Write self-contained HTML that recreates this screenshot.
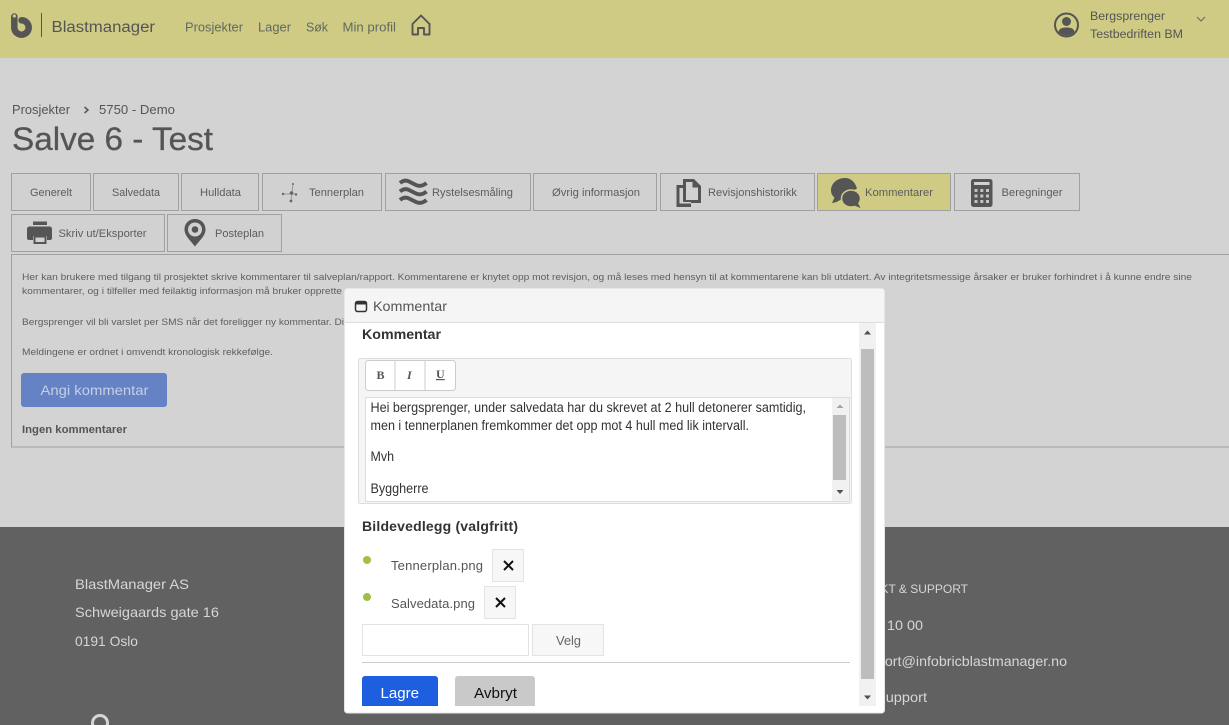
<!DOCTYPE html>
<html lang="no"><head><meta charset="utf-8"><title>Salve 6 - Test</title>
<style>
html,body{margin:0;padding:0;width:1229px;height:725px;overflow:hidden;background:#d3d3d3}
svg{display:block;position:absolute;left:0;top:0}
text{font-family:"Liberation Sans",sans-serif;fill:#555;white-space:pre}
.t{font-size:11px;fill:#5c5c5c}
.tab{fill:#d1d1d1;stroke:#a0a0a0;stroke-width:1}
.p{font-size:9.5px;fill:#5e5e5e}
.n{font-size:13px;fill:#5f6a5e}
.f{font-size:14px;fill:#d6d6d6}
.e{font-size:13.5px;fill:#333}
.b{font-weight:bold;fill:#333}
</style></head><body>
<svg width="1229" height="725" viewBox="0 0 1229 725" xmlns="http://www.w3.org/2000/svg">
<rect width="1229" height="725" fill="#d3d3d3"/>
<rect width="1229" height="58" fill="#cfcb85"/>
<!-- logo -->
<path d="M14.300 16.500V27.500A7.200 7.200 0 1 0 21.500 20.300" fill="none" stroke="#555" stroke-width="6.500" stroke-linecap="round"/>
<circle cx="14.300" cy="16" r="1.600" fill="#cfcb85"/>
<rect x="41" y="13" width="1" height="24" fill="#555"/>
<text x="51.500" y="32" font-size="15.500" textLength="103.500" lengthAdjust="spacingAndGlyphs">Blastmanager</text>
<text class="n" x="185" y="31.500" textLength="58" lengthAdjust="spacingAndGlyphs">Prosjekter</text>
<text class="n" x="258" y="31.500" textLength="33" lengthAdjust="spacingAndGlyphs">Lager</text>
<text class="n" x="306" y="31.500" textLength="22" lengthAdjust="spacingAndGlyphs">Søk</text>
<text class="n" x="342.500" y="31.500" textLength="53.500" lengthAdjust="spacingAndGlyphs">Min profil</text>
<path d="M412 24.500L421 15.500L430 24.500M412.500 24V34.500H418V28H424V34.500H429.500V24" fill="none" stroke="#555" stroke-width="1.900" stroke-linejoin="round"/>
<!-- user -->
<circle cx="1066.500" cy="25" r="11.500" fill="none" stroke="#555" stroke-width="2"/>
<circle cx="1066.500" cy="21.500" r="4.500" fill="#555"/>
<path d="M1058.500 32C1059 28.500 1062 27.500 1066.500 27.500S1074 28.500 1074.500 32A11 11 0 0 1 1058.500 32Z" fill="#555"/>
<text x="1090" y="20" font-size="11.500" textLength="75" lengthAdjust="spacingAndGlyphs" fill="#555">Bergsprenger</text>
<text x="1090" y="38" font-size="11.500" textLength="93" lengthAdjust="spacingAndGlyphs">Testbedriften BM</text>
<path d="M1197 17L1201 21L1205 17" fill="none" stroke="#666" stroke-width="1"/>
<!-- breadcrumbs -->
<text x="12" y="114" font-size="13" fill="#666" textLength="58" lengthAdjust="spacingAndGlyphs">Prosjekter</text>
<path d="M84.500 107L88 110L84.500 113" fill="none" stroke="#555" stroke-width="1.500"/>
<text x="99" y="114" font-size="13" fill="#666" textLength="76" lengthAdjust="spacingAndGlyphs">5750 - Demo</text>
<text x="12" y="150" font-size="32" textLength="201" lengthAdjust="spacingAndGlyphs" stroke="#555" stroke-width=".3">Salve 6 - Test</text>
<!-- tabs -->
<rect class="tab" x="11.500" y="173.500" width="79" height="37"/>
<rect class="tab" x="93.500" y="173.500" width="85" height="37"/>
<rect class="tab" x="181.500" y="173.500" width="77" height="37"/>
<rect class="tab" x="262.500" y="173.500" width="119" height="37"/>
<rect class="tab" x="385.500" y="173.500" width="145" height="37"/>
<rect class="tab" x="533.500" y="173.500" width="123" height="37"/>
<rect class="tab" x="660.500" y="173.500" width="154" height="37"/>
<rect x="817.500" y="173.500" width="133" height="37" fill="#cfcb85" stroke="#a0a0a0"/>
<rect class="tab" x="954.500" y="173.500" width="125" height="37"/>
<rect class="tab" x="11.500" y="214.500" width="153" height="37"/>
<rect class="tab" x="167.500" y="214.500" width="114" height="37"/>
<text class="t" x="30" y="196" textLength="42" lengthAdjust="spacingAndGlyphs">Generelt</text>
<text class="t" x="112" y="196" textLength="48" lengthAdjust="spacingAndGlyphs">Salvedata</text>
<text class="t" x="200" y="196" textLength="41" lengthAdjust="spacingAndGlyphs">Hulldata</text>
<text class="t" x="309" y="196" textLength="55" lengthAdjust="spacingAndGlyphs">Tennerplan</text>
<text class="t" x="432" y="196" textLength="81" lengthAdjust="spacingAndGlyphs">Rystelsesmåling</text>
<text class="t" x="552" y="196" textLength="88" lengthAdjust="spacingAndGlyphs">Øvrig informasjon</text>
<text class="t" x="708" y="196" textLength="89" lengthAdjust="spacingAndGlyphs">Revisjonshistorikk</text>
<text class="t" x="865" y="196" textLength="68" lengthAdjust="spacingAndGlyphs">Kommentarer</text>
<text class="t" x="1001.500" y="196" textLength="61" lengthAdjust="spacingAndGlyphs">Beregninger</text>
<text class="t" x="58.500" y="237" textLength="88" lengthAdjust="spacingAndGlyphs">Skriv ut/Eksporter</text>
<text class="t" x="215" y="237" textLength="49" lengthAdjust="spacingAndGlyphs">Posteplan</text>
<!-- tennerplan icon -->
<path d="M283 194L296 194M293 184L291 201" fill="none" stroke="#8a8a8a" stroke-width=".8"/>
<g fill="#666">
<circle cx="283" cy="194" r="1.200"/><circle cx="293" cy="184" r="1"/><circle cx="291.500" cy="193" r="1.800"/><circle cx="296" cy="194.500" r="1.200"/><circle cx="291" cy="201" r="1.400"/>
</g>
<!-- wave icon -->
<g fill="none" stroke="#555" stroke-width="4" stroke-linejoin="round">
<path d="M400 183C403 180.500 406 180 409 181.500L416 185C419 186.500 423 186 426.500 183"/>
<path d="M400 191.500C403 189 406 188.500 409 190L416 193.500C419 195 423 194.500 426.500 191.500"/>
<path d="M400 200C403 197.500 406 197 409 198.500L416 202C419 203.500 423 203 426.500 200"/>
</g>
<!-- docs icon -->
<path d="M683 179H694L701 186V203H683ZM686 182V200H698V187.500H692.500V182Z" fill="#555" fill-rule="evenodd"/>
<path d="M676.500 185H683V188H679.500V203.500H691V207H676.500Z" fill="#555"/>
<rect x="681" y="202" width="10" height="1" fill="#d1d1d1"/>
<!-- chat icon -->
<path d="M845 178C837 178 831 183.500 831 190.500C831 193.500 832.500 196 834.500 197.500L832 203C836 202.500 839 201 841.500 199C846 197 852 191 857 188.500C855 182 851 178 845 178Z" fill="#555"/>
<ellipse cx="851" cy="198.500" rx="9.500" ry="8.500" fill="#555" stroke="#cfcb85" stroke-width="1.500"/>
<path d="M853 205L860.500 208L857.500 202Z" fill="#555"/>
<!-- calc icon -->
<rect x="971" y="179" width="21.500" height="28" rx="2.500" fill="#555"/>
<rect x="974" y="182" width="15.500" height="3" fill="#d1d1d1"/>
<g fill="#c4c4c4">
<rect x="974.500" y="189" width="3" height="3"/><rect x="980.300" y="189" width="3" height="3"/><rect x="986" y="189" width="3" height="3"/>
<rect x="974.500" y="194.500" width="3" height="3"/><rect x="980.300" y="194.500" width="3" height="3"/><rect x="986" y="194.500" width="3" height="3"/>
<rect x="974.500" y="200" width="3" height="3"/><rect x="980.300" y="200" width="3" height="3"/><rect x="986" y="200" width="3" height="3"/>
</g>
<!-- print icon -->
<path d="M33 221.500H47V225H33Z" fill="#555"/>
<path d="M30 226.500H49.500C51 226.500 52 227.500 52 229V238C52 239.500 51 240 50 240H47V236H33V240H29.500C28 240 27 239.500 27 238V229C27 227.500 28 226.500 30 226.500Z" fill="#555"/>
<path d="M34.500 236.500H45.500V243H34.500Z" fill="none" stroke="#555" stroke-width="2"/>
<!-- pin icon -->
<path d="M195 219C189 219 184.500 223.500 184.500 229.500C184.500 236 191 241 195 246.500C199 241 205.500 236 205.500 229.500C205.500 223.500 201 219 195 219Z" fill="#555"/>
<circle cx="195" cy="229.500" r="7" fill="#d1d1d1"/>
<circle cx="195" cy="229.500" r="3.300" fill="#555"/>
<!-- content -->
<rect x="11.500" y="254.500" width="1240" height="192.500" fill="#d3d3d3" stroke="#a0a0a0"/>
<text class="p" x="22" y="280" textLength="1170" lengthAdjust="spacingAndGlyphs">Her kan brukere med tilgang til prosjektet skrive kommentarer til salveplan/rapport. Kommentarene er knytet opp mot revisjon, og må leses med hensyn til at kommentarene kan bli utdatert. Av integritetsmessige årsaker er bruker forhindret i å kunne endre sine</text>
<text class="p" x="22" y="294" textLength="320" lengthAdjust="spacingAndGlyphs">kommentarer, og i tilfeller med feilaktig informasjon må bruker opprette</text>
<text class="p" x="22" y="325" textLength="322" lengthAdjust="spacingAndGlyphs">Bergsprenger vil bli varslet per SMS når det foreligger ny kommentar. Di</text>
<text class="p" x="22" y="355" textLength="251" lengthAdjust="spacingAndGlyphs">Meldingene er ordnet i omvendt kronologisk rekkefølge.</text>
<rect x="21" y="373" width="146" height="34" rx="3" fill="#6482c4"/>
<text x="40.500" y="395" font-size="14" style="fill:#c5cfe6" textLength="108" lengthAdjust="spacingAndGlyphs">Angi kommentar</text>
<text x="22" y="433" font-size="11" font-weight="bold" textLength="105" lengthAdjust="spacingAndGlyphs">Ingen kommentarer</text>
<!-- footer -->
<rect y="527" width="1229" height="198" fill="#616161"/>
<text class="f" x="75" y="589" textLength="114" lengthAdjust="spacingAndGlyphs">BlastManager AS</text>
<text class="f" x="75" y="617" textLength="144" lengthAdjust="spacingAndGlyphs">Schweigaards gate 16</text>
<text class="f" x="75" y="646" textLength="63" lengthAdjust="spacingAndGlyphs">0191 Oslo</text>
<circle cx="100" cy="723" r="7.500" fill="none" stroke="#d6d6d6" stroke-width="3"/>
<text x="840" y="593" font-size="12" style="fill:#d6d6d6" textLength="128" lengthAdjust="spacingAndGlyphs">KONTAKT &amp; SUPPORT</text>
<text class="f" x="840" y="630" textLength="30" lengthAdjust="spacingAndGlyphs">+47 22</text>
<text class="f" x="887" y="630" textLength="36" lengthAdjust="spacingAndGlyphs">10 00</text>
<text class="f" x="854" y="666" textLength="213" lengthAdjust="spacingAndGlyphs">support@infobricblastmanager.no</text>
<text class="f" x="876" y="702" textLength="51" lengthAdjust="spacingAndGlyphs">Support</text>
<!-- modal -->
<rect x="344.500" y="288.500" width="540" height="424.500" rx="3" fill="#fff" stroke="#e6e6e6"/>
<path d="M345 322.500V291.500A3 3 0 0 1 348 289H881.500A3 3 0 0 1 884 291.500V322.500Z" fill="#f5f5f5"/>
<rect x="345" y="322" width="539" height="1" fill="#ddd"/>
<rect x="355.500" y="301.500" width="11" height="10" rx="2" fill="none" stroke="#333" stroke-width="1.500"/>
<rect x="355.500" y="301.500" width="11" height="3" fill="#333"/>
<text x="373" y="311" font-size="14" textLength="74" lengthAdjust="spacingAndGlyphs">Kommentar</text>
<!-- modal scrollbar -->
<rect x="859" y="323" width="17" height="383" fill="#f1f1f1"/>
<rect x="861" y="349" width="13" height="330" fill="#bdbdbd"/>
<path d="M864 334.500L867.500 330.500L871 334.500Z" fill="#505050"/>
<path d="M864 695.500L867.500 699.500L871 695.500Z" fill="#505050"/>
<text x="362" y="339" font-size="14" class="b" textLength="79" lengthAdjust="spacingAndGlyphs">Kommentar</text>
<!-- editor -->
<rect x="358.500" y="358.500" width="493" height="145" rx="2" fill="#f5f5f5" stroke="#ddd"/>
<rect x="365.500" y="360.500" width="90" height="30" rx="3" fill="#fff" stroke="#ccc"/>
<path d="M395 361V390M425 361V390" stroke="#ccc"/>
<text x="376.500" y="379" font-size="12" font-weight="bold" style="font-family:'Liberation Serif',serif">B</text>
<text x="407" y="379" font-size="12" font-weight="bold" font-style="italic" style="font-family:'Liberation Serif',serif">I</text>
<text x="436" y="378" font-size="12" font-weight="bold" text-decoration="underline" style="font-family:'Liberation Serif',serif">U</text>
<rect x="365.500" y="397.500" width="484" height="104" fill="#fff" stroke="#ddd"/>
<rect x="832" y="398" width="17" height="103" fill="#f1f1f1"/>
<rect x="833" y="415" width="13" height="65" fill="#bdbdbd"/>
<path d="M836.500 408L840 404.500L843.500 408Z" fill="#a3a3a3"/>
<path d="M836.500 490L840 494L843.500 490Z" fill="#505050"/>
<text class="e" x="370.500" y="412" textLength="435.500" lengthAdjust="spacingAndGlyphs">Hei bergsprenger, under salvedata har du skrevet at 2 hull detonerer samtidig,</text>
<text class="e" x="370.500" y="430" textLength="378.500" lengthAdjust="spacingAndGlyphs">men i tennerplanen fremkommer det opp mot 4 hull med lik intervall.</text>
<text class="e" x="370.500" y="461" textLength="23.500" lengthAdjust="spacingAndGlyphs">Mvh</text>
<text class="e" x="370.500" y="493" textLength="58" lengthAdjust="spacingAndGlyphs">Byggherre</text>
<text x="362" y="531" font-size="14" class="b" textLength="156" lengthAdjust="spacing">Bildevedlegg (valgfritt)</text>
<!-- attachments -->
<circle cx="367" cy="560" r="4" fill="#9fc045"/>
<circle cx="367" cy="597" r="4" fill="#9fc045"/>
<text x="391" y="570" font-size="13" textLength="92" lengthAdjust="spacing">Tennerplan.png</text>
<text x="391" y="608" font-size="13" textLength="84" lengthAdjust="spacing">Salvedata.png</text>
<rect x="492.500" y="549.500" width="31" height="32" fill="#f7f7f7" stroke="#e3e3e3"/>
<rect x="484.500" y="586.500" width="31" height="32" fill="#f7f7f7" stroke="#e3e3e3"/>
<path d="M504 561L513 570M513 561L504 570M496 598L505 607M505 598L496 607" stroke="#111" stroke-width="2"/>
<rect x="362.500" y="624.500" width="166" height="31" fill="#fff" stroke="#e3e3e3"/>
<rect x="532.500" y="624.500" width="71" height="31" fill="#f7f7f7" stroke="#e3e3e3"/>
<text x="556" y="645" font-size="13" textLength="25" lengthAdjust="spacing" style="fill:#666">Velg</text>
<rect x="362" y="662" width="488" height="1" fill="#ccc"/>
<!-- buttons -->
<path d="M362 706V679A3 3 0 0 1 365 676H435A3 3 0 0 1 438 679V706Z" fill="#1e5fdf"/>
<path d="M455 706V679A3 3 0 0 1 458 676H532A3 3 0 0 1 535 679V706Z" fill="#c9c9c9"/>
<text x="380.500" y="698" font-size="14.500" style="fill:#fff" textLength="38.500" lengthAdjust="spacingAndGlyphs">Lagre</text>
<text x="474" y="698" font-size="14.500" style="fill:#111" textLength="43" lengthAdjust="spacingAndGlyphs">Avbryt</text>
</svg>
</body></html>
